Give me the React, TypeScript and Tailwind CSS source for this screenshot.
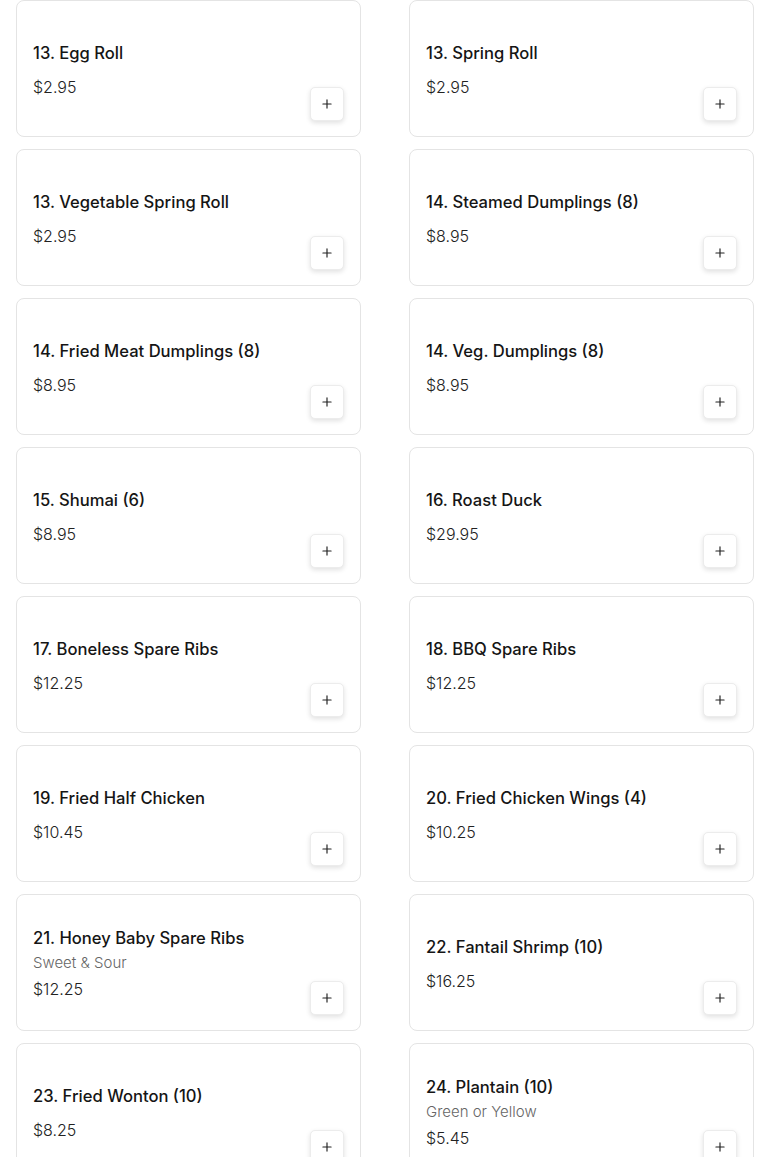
import { Plus } from "lucide-react";

type MenuItem = {
  name: string;
  price: string;
  note?: string;
};

const items: MenuItem[] = [
  { name: "13. Egg Roll", price: "$2.95" },
  { name: "13. Spring Roll", price: "$2.95" },
  { name: "13. Vegetable Spring Roll", price: "$2.95" },
  { name: "14. Steamed Dumplings (8)", price: "$8.95" },
  { name: "14. Fried Meat Dumplings (8)", price: "$8.95" },
  { name: "14. Veg. Dumplings (8)", price: "$8.95" },
  { name: "15. Shumai (6)", price: "$8.95" },
  { name: "16. Roast Duck", price: "$29.95" },
  { name: "17. Boneless Spare Ribs", price: "$12.25" },
  { name: "18. BBQ Spare Ribs", price: "$12.25" },
  { name: "19. Fried Half Chicken", price: "$10.45" },
  { name: "20. Fried Chicken Wings (4)", price: "$10.25" },
  { name: "21. Honey Baby Spare Ribs", price: "$12.25", note: "Sweet & Sour" },
  { name: "22. Fantail Shrimp (10)", price: "$16.25" },
  { name: "23. Fried Wonton (10)", price: "$8.25" },
  { name: "24. Plantain (10)", price: "$5.45", note: "Green or Yellow" },
];

function ItemCard({ item }: { item: MenuItem }) {
  return (
    <div className="flex h-[137px] items-stretch justify-between rounded-lg border border-[#e4e4e4] bg-white pl-4 pr-4 pb-[15px]">
      <div className="flex flex-col justify-center pt-[17px]">
        <div className={`text-[16.6px] font-medium leading-6 text-[#151515] ${item.note ? "mb-[3px]" : "mb-[10px]"}`}>
          {item.name}
        </div>
        {item.note && (
          <div className="mb-[4px] text-[15px] font-light leading-5 text-[#666]">{item.note}</div>
        )}
        <div className="text-[16px] font-light leading-6 text-[#222]">{item.price}</div>
      </div>
      <div className="flex items-end">
        <button className="flex h-[34px] w-[34px] items-center justify-center rounded-[5px] border border-[#ececec] bg-white text-[#222] shadow-[0_2px_5px_rgba(0,0,0,0.12)]">
          <Plus size={14} strokeWidth={2} />
        </button>
      </div>
    </div>
  );
}

export default function App() {
  return (
    <div
      className="min-h-screen bg-white px-4"
      style={{ fontFamily: "Inter, 'Noto Sans', sans-serif" }}
    >
      <div className="grid grid-cols-2 gap-x-12 gap-y-3">
        {items.map((item, i) => (
          <ItemCard key={i} item={item} />
        ))}
      </div>
    </div>
  );
}
